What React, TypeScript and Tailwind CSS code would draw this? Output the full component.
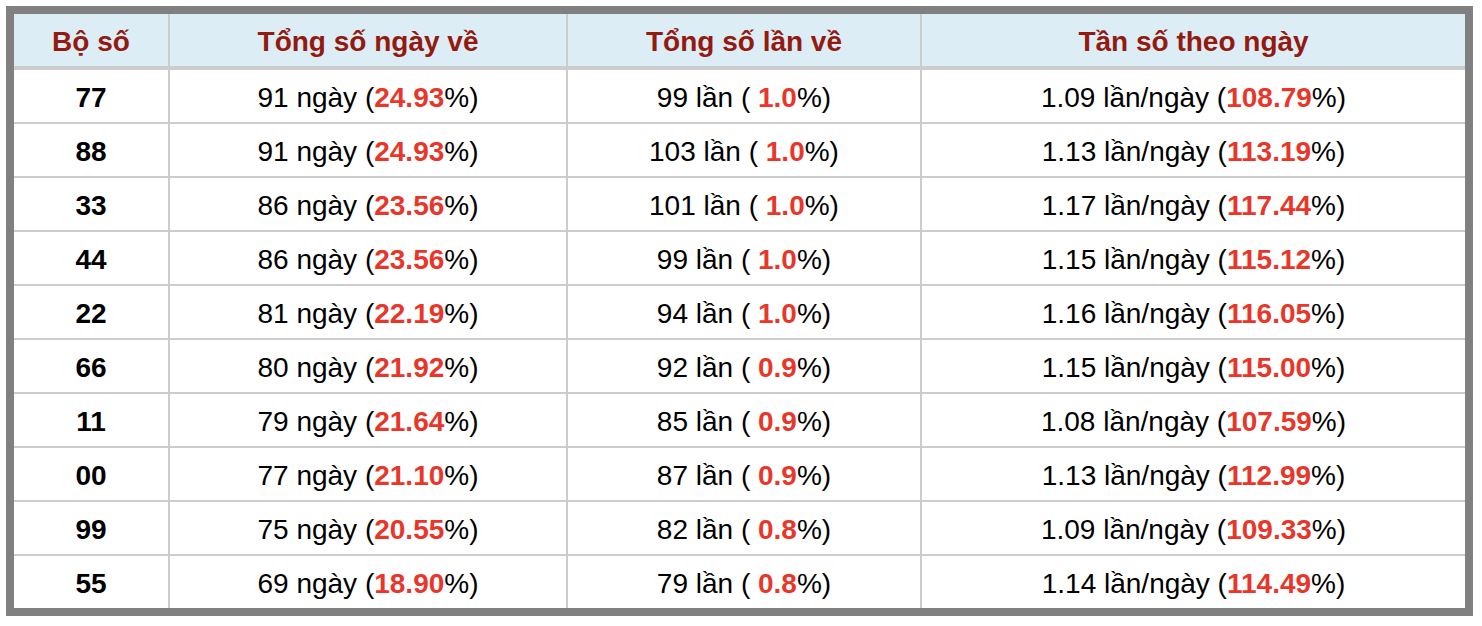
const rows = [
  { bo: "77", ngay: 91, pctNgay: "24.93", lan: 99, pctLan: "1.0", tanSo: "1.09", pctTan: "108.79" },
  { bo: "88", ngay: 91, pctNgay: "24.93", lan: 103, pctLan: "1.0", tanSo: "1.13", pctTan: "113.19" },
  { bo: "33", ngay: 86, pctNgay: "23.56", lan: 101, pctLan: "1.0", tanSo: "1.17", pctTan: "117.44" },
  { bo: "44", ngay: 86, pctNgay: "23.56", lan: 99, pctLan: "1.0", tanSo: "1.15", pctTan: "115.12" },
  { bo: "22", ngay: 81, pctNgay: "22.19", lan: 94, pctLan: "1.0", tanSo: "1.16", pctTan: "116.05" },
  { bo: "66", ngay: 80, pctNgay: "21.92", lan: 92, pctLan: "0.9", tanSo: "1.15", pctTan: "115.00" },
  { bo: "11", ngay: 79, pctNgay: "21.64", lan: 85, pctLan: "0.9", tanSo: "1.08", pctTan: "107.59" },
  { bo: "00", ngay: 77, pctNgay: "21.10", lan: 87, pctLan: "0.9", tanSo: "1.13", pctTan: "112.99" },
  { bo: "99", ngay: 75, pctNgay: "20.55", lan: 82, pctLan: "0.8", tanSo: "1.09", pctTan: "109.33" },
  { bo: "55", ngay: 69, pctNgay: "18.90", lan: 79, pctLan: "0.8", tanSo: "1.14", pctTan: "114.49" },
];

const cols = "grid grid-cols-[154px_396px_352px_1fr] gap-x-[2px]";
const cell = "flex h-[52px] items-center justify-center pt-[3px]";

function Red({ children }: { children: React.ReactNode }) {
  return <b className="font-bold text-[#e8372a]">{children}</b>;
}

export default function App() {
  return (
    <div
      className="p-[6px] text-[28px] leading-none text-black"
      style={{ fontFamily: '"Liberation Sans", Arial, sans-serif' }}
    >
      <div className="w-[1467px] border-8 border-[#808080] bg-[#cccccc]">
        <div className={`${cols} mb-[4px]`}>
          {["Bộ số", "Tổng số ngày về", "Tổng số lần về", "Tần số theo ngày"].map((h) => (
            <div key={h} className={`${cell} bg-[#ddedf5] font-bold text-[#931a10]`}>
              {h}
            </div>
          ))}
        </div>
        <div className="flex flex-col gap-y-[2px]">
          {rows.map((r) => (
            <div key={r.bo} className={cols}>
              <div className={`${cell} bg-white font-bold`}>{r.bo}</div>
              <div className={`${cell} bg-white`}>
                <span>
                  {r.ngay} ngày (<Red>{r.pctNgay}</Red>%)
                </span>
              </div>
              <div className={`${cell} bg-white`}>
                <span>
                  {r.lan} lần ( <Red>{r.pctLan}</Red>%)
                </span>
              </div>
              <div className={`${cell} bg-white`}>
                <span>
                  {r.tanSo} lần/ngày (<Red>{r.pctTan}</Red>%)
                </span>
              </div>
            </div>
          ))}
        </div>
      </div>
    </div>
  );
}
